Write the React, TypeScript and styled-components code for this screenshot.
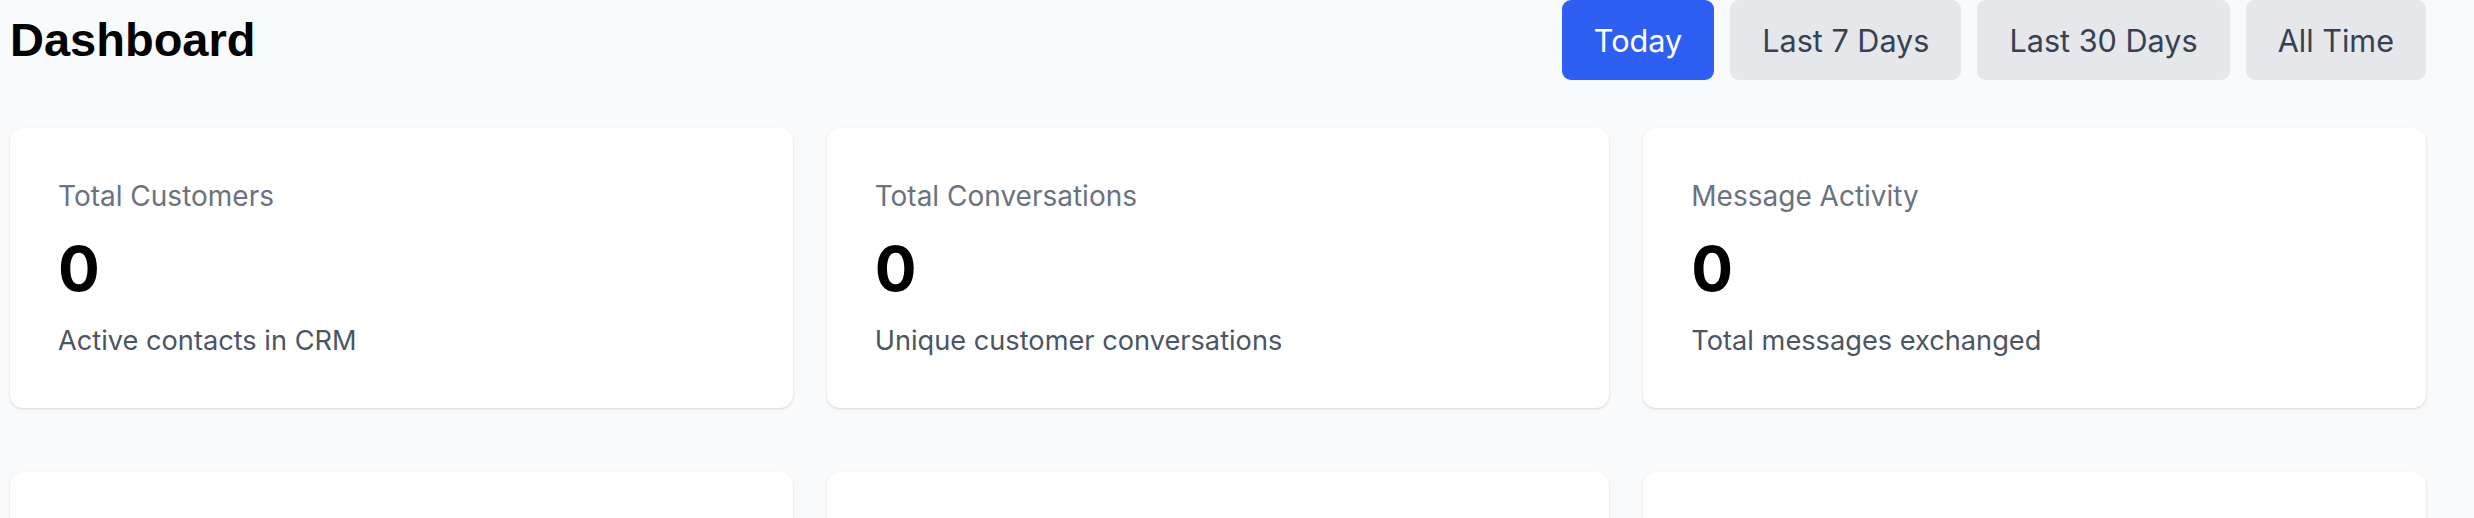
import React from "react";
import styled, { createGlobalStyle } from "styled-components";

const GlobalStyle = createGlobalStyle`
  html, body {
    margin: 0;
    padding: 0;
    background: #f9fafb;
  }
  body {
    font-family: Inter, "Noto Sans", sans-serif;
    -webkit-font-smoothing: antialiased;
  }
  * { box-sizing: border-box; }
`;

const Page = styled.main`
  padding: 0 48px 0 10px;
  display: flex;
  flex-direction: column;
  gap: 48px;
`;

const Header = styled.header`
  display: flex;
  align-items: center;
  justify-content: space-between;
  height: 80px;
`;

const Title = styled.h1`
  margin: 0;
  font-family: "Liberation Sans", Arial, sans-serif;
  font-weight: 700;
  font-size: 47px;
  line-height: 56px;
  color: #000;
`;

const RangeGroup = styled.div`
  display: flex;
  gap: 16px;
  height: 100%;
`;

const RangeButton = styled.button<{ $active?: boolean }>`
  height: 80px;
  padding: 0 32px;
  border: none;
  border-radius: 9px;
  font-family: Inter, sans-serif;
  font-size: 30.6px;
  font-weight: 400;
  cursor: pointer;
  background: ${(p) => (p.$active ? "#2e5ff2" : "#e5e7eb")};
  color: ${(p) => (p.$active ? "#ffffff" : "#374151")};
`;

const Grid = styled.section`
  display: grid;
  grid-template-columns: repeat(3, 1fr);
  column-gap: 34px;
  row-gap: 64px;
`;

const Card = styled.div`
  background: #ffffff;
  border-radius: 13px;
  padding: 48px;
  min-height: 280px;
  box-shadow: 0 1px 3px rgba(0, 0, 0, 0.1), 0 1px 2px rgba(0, 0, 0, 0.06);
  display: flex;
  flex-direction: column;
  gap: 16px;
`;

const Label = styled.div`
  font-size: 28px;
  line-height: 40px;
  color: #6b7280;
`;

const Value = styled.div`
  font-size: 62px;
  line-height: 74px;
  font-weight: 700;
  color: #000;
`;

const Desc = styled.div`
  font-size: 27.2px;
  line-height: 38px;
  color: #4b5563;
`;

const ranges = ["Today", "Last 7 Days", "Last 30 Days", "All Time"];

const stats = [
  { label: "Total Customers", value: "0", desc: "Active contacts in CRM" },
  { label: "Total Conversations", value: "0", desc: "Unique customer conversations" },
  { label: "Message Activity", value: "0", desc: "Total messages exchanged" },
];

export default function App() {
  return (
    <>
      <GlobalStyle />
      <Page>
        <Header>
          <Title>Dashboard</Title>
          <RangeGroup>
            {ranges.map((r, i) => (
              <RangeButton key={r} $active={i === 0}>
                {r}
              </RangeButton>
            ))}
          </RangeGroup>
        </Header>
        <Grid>
          {stats.map((s) => (
            <Card key={s.label}>
              <Label>{s.label}</Label>
              <Value>{s.value}</Value>
              <Desc>{s.desc}</Desc>
            </Card>
          ))}
          <Card />
          <Card />
          <Card />
        </Grid>
      </Page>
    </>
  );
}
